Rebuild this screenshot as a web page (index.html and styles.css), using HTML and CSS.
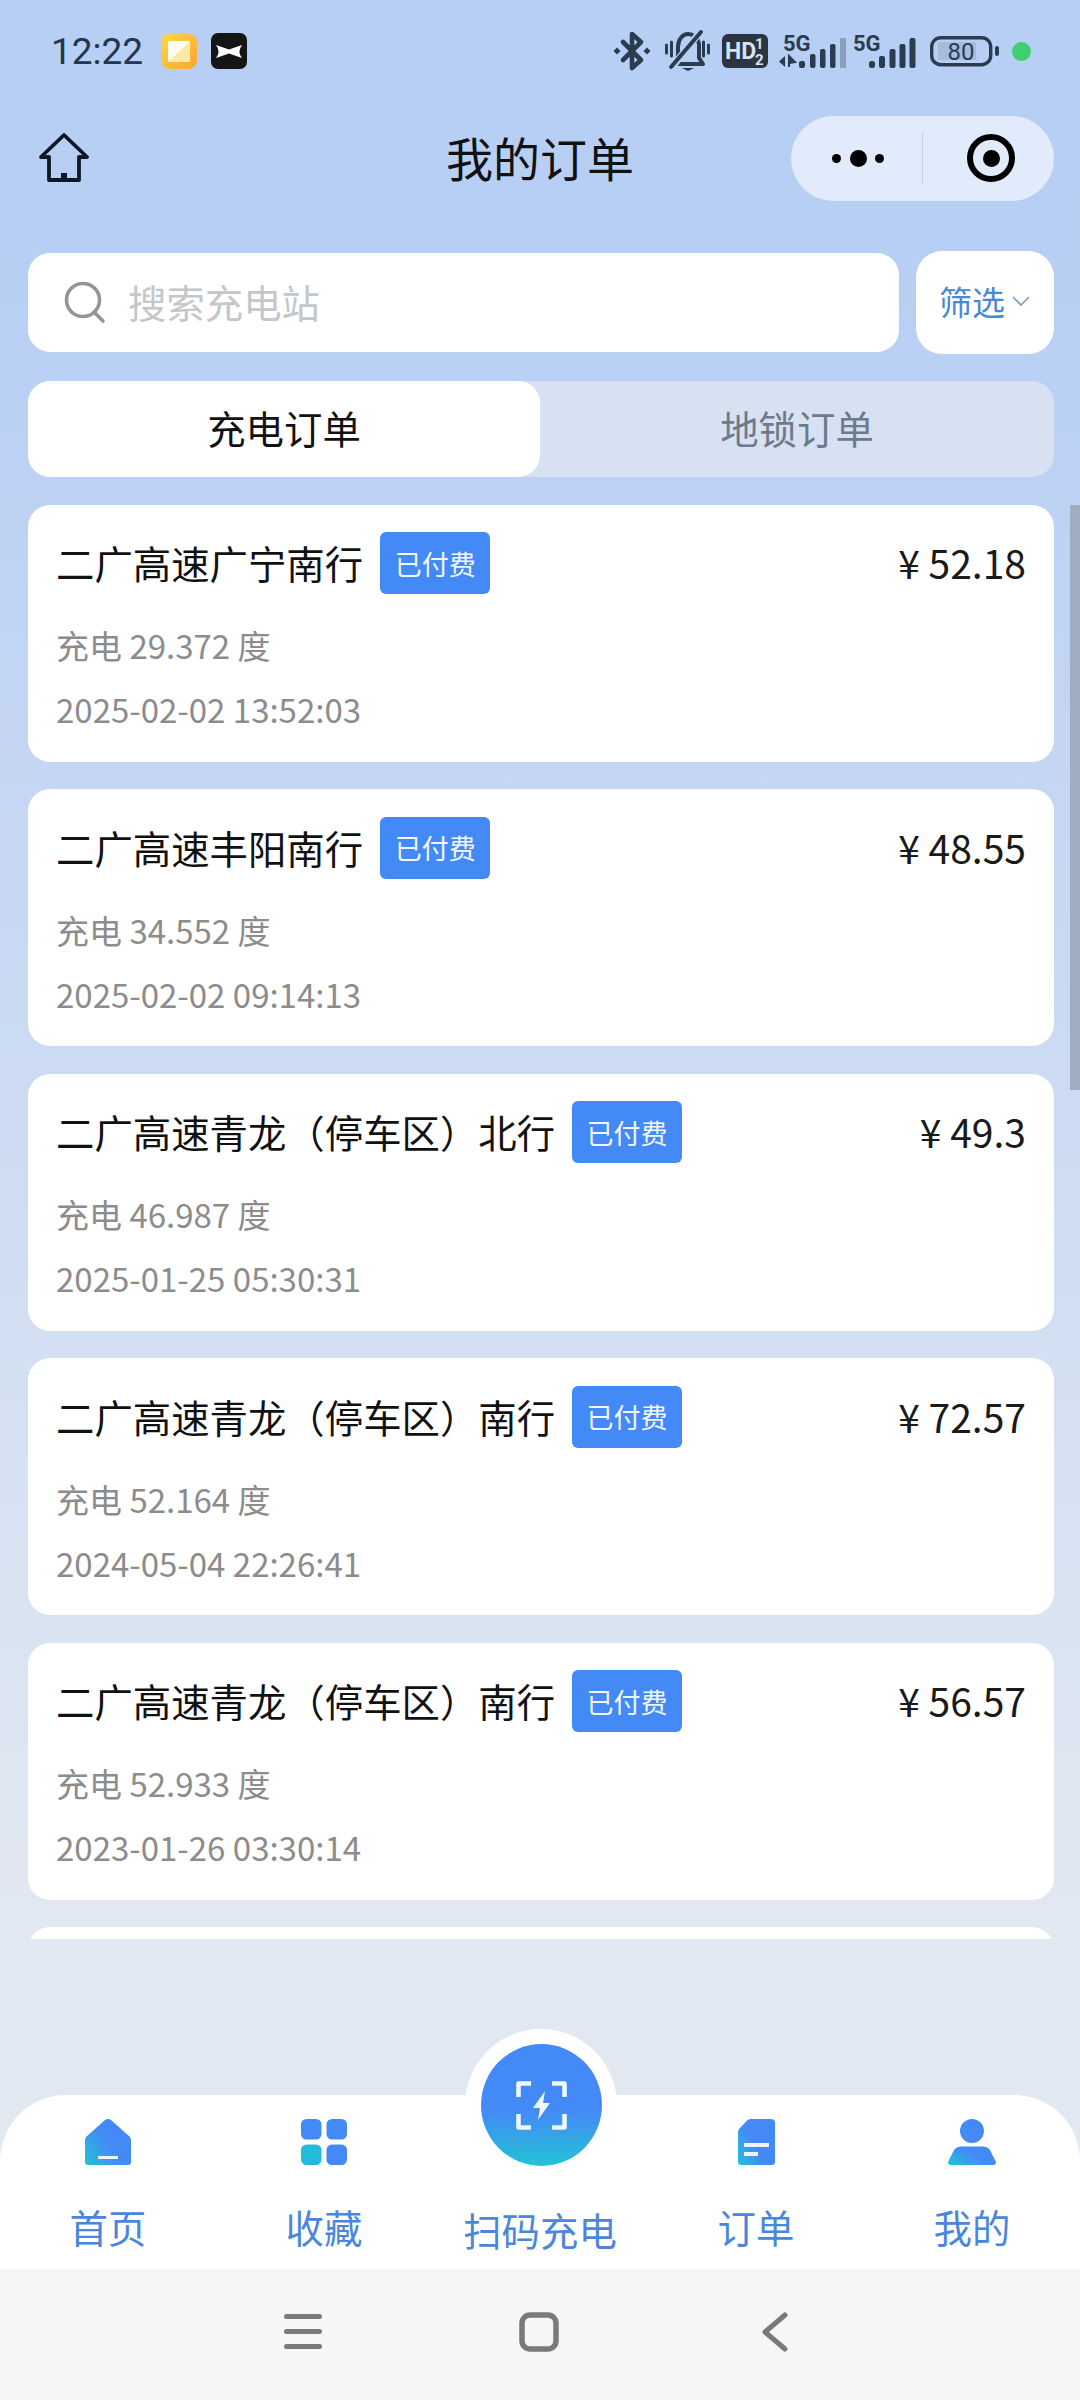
FILE: index.html
```html
<!DOCTYPE html>
<html lang="zh-CN">
<head>
<meta charset="utf-8">
<title>我的订单</title>
<link rel="stylesheet" href="styles.css">
</head>
<body>
<div class="page">
  <header class="statusbar">
    <div class="status-left">
      <span class="time">12:22</span>
      <svg class="app-icon first" viewBox="0 0 36 36"><defs><linearGradient id="ga" x1="0" y1="0" x2="1" y2="1"><stop offset="0" stop-color="#fbd94a"/><stop offset="1" stop-color="#fda52b"/></linearGradient></defs><rect width="36" height="36" rx="9" fill="url(#ga)"/><rect x="7" y="8" width="22" height="21" fill="#fde9a8"/><path d="M7 8h22L7 29z" fill="#fffdf3"/></svg>
      <svg class="app-icon" viewBox="0 0 36 36"><rect width="36" height="36" rx="7" fill="#151515"/><path d="M5 12L18 16.500 31 12Q26 18.500 31 25L18 20.500 5 25Q10 18.500 5 12z" fill="#fff"/></svg>
    </div>
    <div class="status-right">
      <svg class="ic-bt" viewBox="0 0 36 38"><path d="M9 10l18 18-9 8V2l9 8L9 28" fill="none" stroke="#2b3b50" stroke-width="4.600" stroke-linejoin="round" stroke-linecap="round"/><path d="M3 15.500l3.500 3.500L3 22.500-.5 19zM33 15.500l3.500 3.500-3.500 3.500-3.500-3.500z" fill="#2b3b50"/></svg>
      <svg class="ic-mute" viewBox="0 0 45 40"><path d="M13 28V16C13 8 18 3 23 3s10 4 11 10v14l4 6H9z" fill="none" stroke="#2b3b50" stroke-width="4" stroke-linejoin="round"/><path d="M8 35L35 1" stroke="#b8cff4" stroke-width="7"/><path d="M6 36L36 1" stroke="#2b3b50" stroke-width="4" stroke-linecap="round"/><path d="M17 37h12l-6 3z" fill="#2b3b50"/><path d="M1.500 14v8M6.500 11v14M38.500 11v14M43.500 14v8" stroke="#2b3b50" stroke-width="3" stroke-linecap="round"/></svg>
      <svg class="ic-hd" viewBox="0 0 46 34"><rect width="46" height="34" rx="6" fill="#2b3541"/><text class="hd-main" x="3" y="25">HD</text><text class="hd-frac" x="33" y="15">1</text><text class="hd-frac" x="33" y="31">2</text></svg>
      <svg class="ic-sig1" viewBox="0 0 67 33"><text class="five-g" x="4" y="16">5G</text><path d="M6 21v11l-6-5.500z" fill="#2b3b50"/><path d="M10 21l6 6-6 1zM10 21v11" fill="#2b3b50" stroke="#2b3b50" stroke-width="2"/><rect x="20" y="26" width="6" height="7" rx="2" fill="#2b3b50"/><rect x="31" y="19" width="5.500" height="14" rx="2" fill="#2b3b50"/><rect x="41" y="14" width="5.500" height="19" rx="2" fill="#2b3b50"/><rect x="51" y="9" width="5.500" height="24" rx="2" fill="#2b3b50"/><rect x="61" y="3" width="6" height="30" fill="#8ba0bd"/></svg>
      <svg class="ic-sig2" viewBox="0 0 63 33"><text class="five-g" x="0" y="16">5G</text><rect x="16" y="26" width="6" height="7" rx="2.500" fill="#2b3b50"/><rect x="26" y="21" width="6" height="12" rx="2" fill="#2b3b50"/><rect x="36.500" y="14" width="6" height="19" rx="2" fill="#2b3b50"/><rect x="46.500" y="9" width="6" height="24" rx="2" fill="#2b3b50"/><rect x="56.500" y="3" width="6" height="30" rx="2" fill="#2b3b50"/></svg>
      <svg class="ic-batt" viewBox="0 0 69 30"><rect x="1.700" y="1.700" width="59" height="27" rx="9" fill="none" stroke="#2b3b50" stroke-width="3.400"/><rect x="8" y="6" width="38" height="18" fill="#a5bcdc"/><text class="batt-num" x="31" y="24">80</text><rect x="65" y="10" width="4" height="10" rx="2" fill="#2b3b50"/></svg>
      <span class="status-dot"></span>
    </div>
  </header>

  <nav class="navbar">
    <svg class="nav-home" viewBox="0 0 52 50"><path d="M11 47V24H3L26 2l23 22h-8v23z" fill="none" stroke="#0d1a26" stroke-width="3.800" stroke-linejoin="round"/><rect x="23" y="40" width="6" height="7" fill="#0d1a26"/></svg>
    <h1 class="nav-title">我的订单</h1>
    <div class="capsule">
      <div class="capsule-more"><i class="dot"></i><i class="dot big"></i><i class="dot"></i></div>
      <div class="capsule-line"></div>
      <div class="capsule-target"><i></i></div>
    </div>
  </nav>

  <section class="search-row">
    <div class="search">
      <svg class="search-icon" viewBox="0 0 42 44"><circle cx="19" cy="19" r="16.500" fill="none" stroke="#959595" stroke-width="3.600"/><path d="M30 31l9 9" stroke="#959595" stroke-width="3.600" stroke-linecap="round"/></svg>
      <span class="search-text">搜索充电站</span>
    </div>
    <div class="filter">
      <span>筛选</span>
      <svg class="chevron" viewBox="0 0 18 10"><path d="M1 1l8 8 8-8" fill="none" stroke="#7f97b8" stroke-width="1.600"/></svg>
    </div>
  </section>

  <section class="tabs">
    <div class="tab active">充电订单</div>
    <div class="tab">地锁订单</div>
  </section>

  <main class="orders">
    <div class="scrollbar"></div>
    <article class="card">
      <div class="card-head"><span class="card-title">二广高速广宁南行</span><span class="badge">已付费</span><span class="price">¥ 52.18</span></div>
      <p class="card-sub">充电 29.372 度</p>
      <p class="card-date">2025-02-02 13:52:03</p>
    </article>
    <article class="card">
      <div class="card-head"><span class="card-title">二广高速丰阳南行</span><span class="badge">已付费</span><span class="price">¥ 48.55</span></div>
      <p class="card-sub">充电 34.552 度</p>
      <p class="card-date">2025-02-02 09:14:13</p>
    </article>
    <article class="card">
      <div class="card-head"><span class="card-title">二广高速青龙（停车区）北行</span><span class="badge">已付费</span><span class="price">¥ 49.3</span></div>
      <p class="card-sub">充电 46.987 度</p>
      <p class="card-date">2025-01-25 05:30:31</p>
    </article>
    <article class="card">
      <div class="card-head"><span class="card-title">二广高速青龙（停车区）南行</span><span class="badge">已付费</span><span class="price">¥ 72.57</span></div>
      <p class="card-sub">充电 52.164 度</p>
      <p class="card-date">2024-05-04 22:26:41</p>
    </article>
    <article class="card">
      <div class="card-head"><span class="card-title">二广高速青龙（停车区）南行</span><span class="badge">已付费</span><span class="price">¥ 56.57</span></div>
      <p class="card-sub">充电 52.933 度</p>
      <p class="card-date">2023-01-26 03:30:14</p>
    </article>
    <article class="card"></article>
  </main>

  <footer class="tabbar">
    <div class="tb-item">
      <svg class="tb-icon" viewBox="0 0 46 46"><defs><linearGradient id="g1" x1="1" y1="0.300" x2="0" y2="1"><stop offset="0.450" stop-color="#448af7"/><stop offset="1" stop-color="#22c3d4"/></linearGradient></defs><path d="M0 21q0-2 1.500-3.500L20 1q3-2 6 0l18.500 16.500Q46 19 46 21v22q0 3-3 3H3q-3 0-3-3z" fill="url(#g1)"/><rect x="13" y="37" width="20" height="3" fill="#e8f6fb"/></svg>
      <span class="tb-label">首页</span>
    </div>
    <div class="tb-item">
      <svg class="tb-icon" viewBox="0 0 46 46"><rect width="20.500" height="20.500" rx="5.500" fill="#448af7"/><rect x="25.500" width="20.500" height="20.500" rx="5.500" fill="#448af7"/><rect y="25.500" width="20.500" height="20.500" rx="5.500" fill="#24bbd8"/><rect x="25.500" y="25.500" width="20.500" height="20.500" rx="5.500" fill="#448af7"/></svg>
      <span class="tb-label">收藏</span>
    </div>
    <div class="tb-item tb-center">
      <div class="scan-ring">
        <div class="scan-btn">
          <svg class="scan-icon" viewBox="0 0 51 49"><path d="M15 2.500H2.500V16M36 2.500h12.500V16M15 46.500H2.500V33M36 46.500h12.500V33" fill="none" stroke="#eef6fe" stroke-width="4.600" stroke-linejoin="round"/><path d="M29 10L17 27h7l-2 12 12-17h-7z" fill="#eef6fe"/></svg>
        </div>
      </div>
      <span class="tb-label">扫码充电</span>
    </div>
    <div class="tb-item">
      <svg class="tb-icon" viewBox="0 0 37 46"><defs><linearGradient id="g4" x1="1" y1="0.300" x2="0" y2="1"><stop offset="0.500" stop-color="#448af7"/><stop offset="1" stop-color="#22c3d4"/></linearGradient></defs><path d="M0 13q0-2 1.500-3.500L9 1.500Q10.500 0 12.500 0H33q4 0 4 4v39q0 3-3 3H3q-3 0-3-3z" fill="url(#g4)"/><rect x="6" y="24" width="25" height="4" fill="#e8f6fb"/><rect x="6" y="33" width="14" height="4" fill="#e8f6fb"/></svg>
      <span class="tb-label">订单</span>
    </div>
    <div class="tb-item">
      <svg class="tb-icon" viewBox="0 0 48 46"><defs><linearGradient id="g5" x1="1" y1="0.200" x2="0" y2="0.900"><stop offset="0.450" stop-color="#448af7"/><stop offset="1" stop-color="#22c3d4"/></linearGradient></defs><circle cx="24" cy="12" r="12" fill="#448af7"/><path d="M0 43l6-12q2.500-3.500 7-3.500h22q4.500 0 7 3.500l6 12q0 3-3 3H3q-3 0-3-3z" fill="url(#g5)"/></svg>
      <span class="tb-label">我的</span>
    </div>
  </footer>

  <div class="sysnav">
    <svg class="sys-menu" viewBox="0 0 38 35"><path d="M2.500 2.500h33M2.500 17.500h33M2.500 32.500h33" stroke="#7a7a7a" stroke-width="5" stroke-linecap="round"/></svg>
    <svg class="sys-home" viewBox="0 0 40 40"><rect x="3" y="3" width="34" height="34" rx="8" fill="none" stroke="#7a7a7a" stroke-width="5.500"/></svg>
    <svg class="sys-back" viewBox="0 0 26 40"><path d="M23 3L3 20l20 17" fill="none" stroke="#7a7a7a" stroke-width="5" stroke-linecap="round" stroke-linejoin="round"/></svg>
  </div>
</div>
</body>
</html>
```
FILE: styles.css
```css
* { box-sizing: border-box; margin: 0; padding: 0; }
html, body { width: 1080px; height: 2400px; overflow: hidden; }
body { font-family: "Noto Sans CJK SC", "Noto Sans", sans-serif; }
.page {
  width: 1080px; height: 2400px; display: flex; flex-direction: column; position: relative; overflow: hidden;
  background: linear-gradient(180deg, #b7cff4 0, #b8cff4 300px, #e2e8f1 1940px);
}

/* status bar */
.statusbar { height: 102px; flex: none; display: flex; align-items: center; justify-content: space-between; padding: 0 49.500px 0 51px; }
.status-left, .status-right { display: flex; align-items: center; }
.time { font: 400 37px/40px Roboto, sans-serif; color: #24364e; width: 90px; white-space: nowrap; position: relative; top: 1px; }
.app-icon { width: 36px; height: 36px; margin-left: 14px; display: block; }
.app-icon.first { margin-left: 20px; }
.status-right svg { display: block; flex: none; overflow: visible; }
.ic-bt { width: 36px; height: 38px; }
.ic-mute { width: 45px; height: 40px; margin-left: 15px; }
.ic-hd { width: 46px; height: 34px; margin-left: 12px; }
.ic-sig1 { width: 67px; height: 33px; margin-left: 11px; }
.ic-sig2 { width: 63px; height: 33px; margin-left: 7px; }
.ic-batt { width: 69px; height: 30px; margin-left: 14px; }
.status-dot { width: 19px; height: 19px; border-radius: 50%; background: #3ecf6e; margin-left: 12.500px; }
.hd-main { font: 700 23px Roboto, sans-serif; fill: #d7e2f2; }
.hd-frac { font: 700 15px Roboto, sans-serif; fill: #d7e2f2; }
.five-g { font: 700 22px Roboto, sans-serif; fill: #2b3b50; }
.batt-num { font: 400 24px Roboto, sans-serif; fill: #2b3b50; text-anchor: middle; }

/* nav */
.navbar { height: 112px; flex: none; display: grid; grid-template-columns: 1fr auto 1fr; align-items: center; padding: 0 26px; }
.nav-home { width: 52px; height: 50px; margin-left: 12px; display: block; }
.nav-title { font-size: 47px; line-height: 60px; font-weight: 400; color: #111; text-align: center; padding-bottom: 3px; }
.capsule { justify-self: end; width: 263px; height: 85px; border-radius: 43px; background: #e1ebfb; display: flex; align-items: center; }
.capsule-more { width: 131px; display: flex; align-items: center; justify-content: flex-end; gap: 8.500px; padding-right: 38px; flex: none; }
.dot { width: 9px; height: 9px; border-radius: 50%; background: #000; display: block; }
.dot.big { width: 17px; height: 17px; }
.capsule-line { width: 1px; height: 52px; background: #c6d2e4; flex: none; }
.capsule-target { width: 48px; height: 48px; border: 6px solid #000; border-radius: 50%; margin-left: 44px; display: flex; align-items: center; justify-content: center; flex: none; }
.capsule-target i { width: 17px; height: 17px; background: #000; border-radius: 50%; display: block; }

/* search */
.search-row { flex: none; margin-top: 37px; padding: 0 26px 0 28px; display: flex; align-items: center; gap: 17px; height: 103px; }
.search { flex: 1; height: 99px; background: #fff; border-radius: 22px; display: flex; align-items: center; padding-left: 36px; }
.search-icon { width: 42px; height: 44px; flex: none; display: block; }
.search-text { font-size: 38.400px; line-height: 50px; color: #c4c6ca; margin-left: 22px; padding-bottom: 3px; }
.filter { width: 138px; height: 103px; flex: none; background: #fff; border-radius: 26px; display: flex; align-items: center; padding-left: 23px; font-size: 33px; color: #4a87d8; padding-bottom: 3px; }
.chevron { width: 18px; height: 10px; margin-left: 7px; display: block; }

/* tabs */
.tabs { flex: none; margin: 26.500px 26px 0 28px; height: 96.500px; display: flex; background: #d7e1f2; border-radius: 22px; }
.tab { flex: 1; display: flex; align-items: center; justify-content: center; font-size: 38.400px; color: #6c7a8e; padding-bottom: 3px; }
.tab.active { flex: none; width: 512px; background: #fff; border-radius: 22px; color: #111; }

/* orders */
.orders { flex: none; height: 1434.500px; margin-top: 27.500px; padding: 0 26px 0 28px; display: flex; flex-direction: column; gap: 27.500px; overflow: hidden; position: relative; }
.scrollbar { position: absolute; right: 0; top: 0; width: 10px; height: 585px; background: #a0adc0; }
.card { flex: none; height: 257px; background: #fff; border-radius: 22px; padding: 27.500px 28px 0 28px; }
.card-head { height: 62px; display: flex; align-items: center; gap: 17px; }
.card-title { font-size: 38.400px; line-height: 62px; color: #111; white-space: nowrap; padding-bottom: 2px; }
.badge { width: 110px; height: 62px; border-radius: 6px; background: #448af7; color: #f2f7fe; font-size: 27px; display: flex; align-items: center; justify-content: center; flex: none; }
.price { margin-left: auto; font-size: 39px; line-height: 62px; color: #1a1a1a; white-space: pre; padding-bottom: 2px; }
.card-sub, .card-date { font-size: 33px; line-height: 64px; color: #8c8c8c; white-space: nowrap; }
.card-sub { margin-top: 19px; }

/* bottom tabbar */
.tabbar { position: relative; flex: none; margin-top: 156px; height: 174px; background: #fff; border-radius: 66px 66px 0 0; display: grid; grid-template-columns: repeat(5, 1fr); }
.tb-item { display: flex; flex-direction: column; align-items: center; padding-top: 24px; }
.tb-icon { height: 46px; width: auto; display: block; }
.tb-label { font-size: 38.400px; line-height: 50px; color: #4a87dc; margin-top: 36px; white-space: nowrap; }
.tb-center { padding-top: 109px; }
.tb-center .tb-label { margin-top: 0; }
.scan-ring { position: absolute; left: 465px; top: -66px; width: 152px; height: 152px; border-radius: 50%; background: #fff; display: flex; align-items: center; justify-content: center; }
.scan-btn { width: 121px; height: 122px; border-radius: 50%; background: linear-gradient(180deg, #448af7 55%, #22c3d4 100%); display: flex; align-items: center; justify-content: center; }
.scan-icon { width: 51px; height: 49px; display: block; }

/* system nav */
.sysnav { flex: 1; background: #f6f6f6; position: relative; display: flex; align-items: center; padding-left: 284px; padding-bottom: 6px; }
.sysnav svg { display: block; flex: none; }
.sys-menu { width: 38px; height: 35px; }
.sys-home { width: 40px; height: 40px; margin-left: 197px; }
.sys-back { width: 26px; height: 40px; margin-left: 203px; }
```
